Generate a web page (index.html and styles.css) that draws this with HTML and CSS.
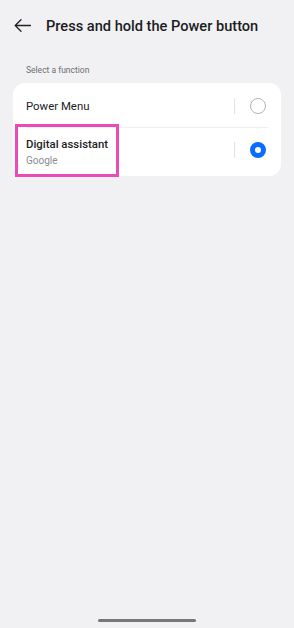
FILE: index.html
```html
<!DOCTYPE html>
<html>
<head>
<meta charset="utf-8">
<link rel="stylesheet" href="styles.css">
</head>
<body>
<div class="screen">
  <header class="topbar">
    <svg class="back" width="17" height="13" viewBox="0 0 17 13" aria-hidden="true">
      <path d="M16.5 6.5H1.2M7 0.7L1.2 6.5L7 12.3" fill="none" stroke="#222" stroke-width="1.3" stroke-linecap="round" stroke-linejoin="round"/>
    </svg>
    <h1 class="title">Press and hold the Power button</h1>
  </header>
  <div class="section-label">Select a function</div>
  <div class="card">
    <div class="row row-first">
      <div class="row-text">
        <div class="row-title">Power Menu</div>
      </div>
      <span class="vdivider"></span>
      <span class="radio"></span>
    </div>
    <div class="separator"></div>
    <div class="row row-second">
      <div class="row-text">
        <div class="row-title bold">Digital assistant</div>
        <div class="row-sub">Google</div>
      </div>
      <span class="vdivider"></span>
      <span class="radio checked"></span>
    </div>
    <div class="highlight"></div>
  </div>
  <div class="spacer"></div>
  <div class="homebar"></div>
</div>
</body>
</html>
```
FILE: styles.css
```css
html, body {
  margin: 0;
  padding: 0;
  background: #f1f1f4;
  font-family: Roboto, "Noto Sans", sans-serif;
}
.screen {
  width: 294px;
  height: 628px;
  display: flex;
  flex-direction: column;
}
.topbar {
  height: 51px;
  display: flex;
  align-items: center;
  padding-left: 14px;
  gap: 15px;
}
.back {
  display: block;
  flex: none;
}
.title {
  margin: 0;
  font-size: 14.6px;
  font-weight: 500;
  color: #1c1c1e;
  line-height: 18px;
}
.section-label {
  margin-top: 13px;
  padding-left: 26px;
  font-size: 8.5px;
  color: #6e6e72;
  line-height: 12px;
}
.card {
  position: relative;
  margin: 6.5px 13px 0;
  background: #ffffff;
  border-radius: 12px;
}
.row {
  display: flex;
  align-items: center;
  box-sizing: border-box;
  padding: 0 15px 0 13px;
}
.row-first {
  height: 44px;
  padding-top: 3px;
}
.row-second {
  height: 48.5px;
  padding-bottom: 3px;
}
.row-second .row-text {
  padding-top: 3px;
}
.row-text {
  flex: 1;
  display: flex;
  flex-direction: column;
}
.row-title {
  font-size: 11.4px;
  line-height: 14px;
  color: #1c1c1e;
}
.row-title.bold {
  font-weight: 500;
}
.row-sub {
  font-size: 10px;
  line-height: 13px;
  color: #8b8b8f;
  margin-top: 3px;
}
.vdivider {
  width: 1px;
  height: 16px;
  background: #e2e2e4;
  margin-right: 15px;
}
.radio {
  width: 16px;
  height: 16px;
  box-sizing: border-box;
  border-radius: 50%;
  border: 1px solid #b4b4b8;
  background: #fff;
}
.radio.checked {
  border: 5px solid #0a6cff;
}
.separator {
  height: 1px;
  background: #eeeeef;
  margin: 0 13px;
}
.highlight {
  position: absolute;
  left: 2px;
  top: 41.5px;
  width: 104px;
  height: 53px;
  box-sizing: border-box;
  border: 3px solid #ea4cb6;
}
.spacer {
  flex: 1;
}
.homebar {
  align-self: center;
  width: 98px;
  height: 3px;
  border-radius: 2px;
  background: #777779;
  margin-bottom: 6px;
}
```
